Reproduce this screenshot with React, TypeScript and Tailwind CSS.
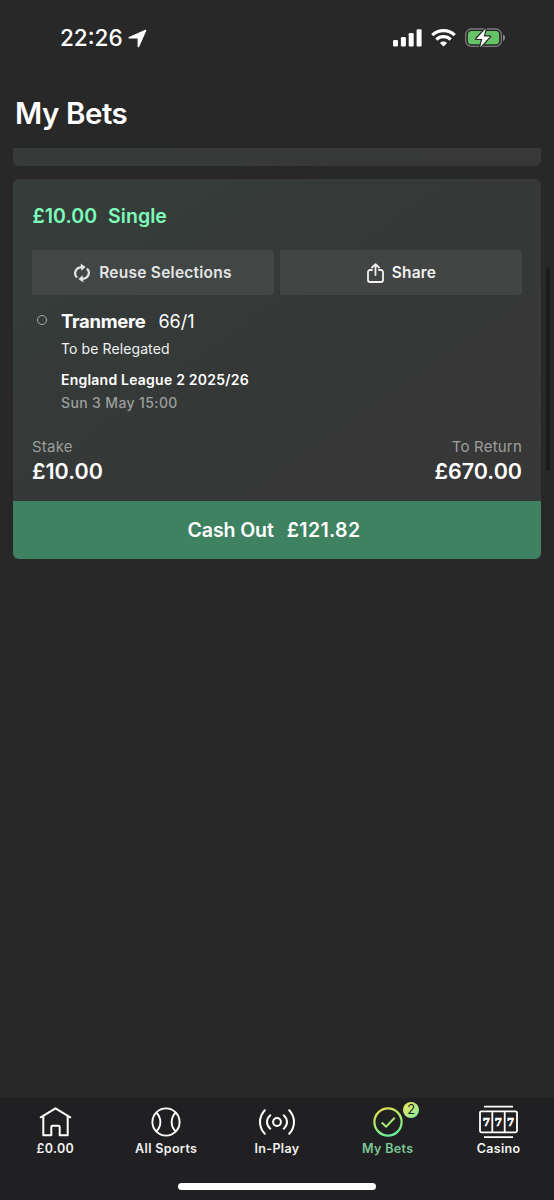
import type { ReactNode } from 'react';

interface TabItem {
  label: string;
  icon: ReactNode;
  active?: boolean;
  badge?: number;
}

function LocationArrow() {
  return (
    <svg width="19" height="19" viewBox="0 0 19 19" fill="white">
      <path d="M17.900.9c.5.2.5.7.3 1.200l-7 15.700c-.4.9-1.600.7-1.600-.3V9.600H1.300c-1 0-1.200-1.200-.3-1.600L16.700.9c.4-.2.9-.2 1.200 0z" />
    </svg>
  );
}

function SignalIcon() {
  return (
    <svg width="29" height="19" viewBox="0 0 29 19" fill="white">
      <rect x="0" y="11" width="5" height="6.500" rx="1.300" />
      <rect x="7.900" y="8" width="5" height="9.500" rx="1.300" />
      <rect x="15.700" y="4" width="5" height="13.500" rx="1.300" />
      <rect x="23.600" y="0.200" width="5" height="17.300" rx="1.300" />
    </svg>
  );
}

function WifiIcon() {
  return (
    <svg width="25" height="19" viewBox="0 0 25 19" fill="none" stroke="white" strokeWidth="3.200">
      <path d="M1.300 6.100a16.200 16.200 0 0 1 22.400 0" />
      <path d="M5.300 10.500a10.400 10.400 0 0 1 14.400 0" />
      <path d="M12.500 17.600l-3.600-3.600a5.200 5.200 0 0 1 7.200 0z" fill="white" stroke="none" />
    </svg>
  );
}

function BatteryIcon() {
  return (
    <svg width="41" height="21" viewBox="0 0 41 21">
      <rect x="0.700" y="1" width="35.600" height="17.400" rx="5.500" fill="none" stroke="#7b7b7b" strokeWidth="1.300" />
      <rect x="2.900" y="3.100" width="31.200" height="13.200" rx="3.600" fill="#65c466" />
      <path d="M38 6.600c1.300.4 2 1.600 2 3.100s-.7 2.700-2 3.100z" fill="#8a8a8a" />
      <path
        d="M20.800.5L11.200 10.900h6.200l-2.300 8.300 9.900-10.700h-6.300z"
        fill="white"
        stroke="#282828"
        strokeWidth="2.400"
        strokeLinejoin="round"
        paintOrder="stroke"
      />
    </svg>
  );
}

function ReuseIcon() {
  return (
    <svg width="16" height="20" viewBox="0 0 16 20" fill="none" stroke="#e4e6e5" strokeWidth="2.200">
      <path d="M3 14.600C-.8 10.600 1.600 4.600 7.600 4.200" />
      <path d="M13 5.400C16.800 9.400 14.400 15.400 8.400 15.800" />
      <path d="M6.600.6l5 3.500-4.200 3.600zM9.400 19.400l-5-3.500 4.200-3.600z" fill="#e4e6e5" stroke="none" />
    </svg>
  );
}

function ShareIcon() {
  return (
    <svg
      width="17"
      height="20"
      viewBox="0 0 17 20"
      fill="none"
      stroke="#f0f1f0"
      strokeWidth="1.800"
      strokeLinecap="round"
      strokeLinejoin="round"
    >
      <path d="M5 7H3a2 2 0 0 0-2 2v8a2 2 0 0 0 2 2h11a2 2 0 0 0 2-2V9a2 2 0 0 0-2-2h-2" />
      <path d="M8.500 12V1.200M5 4.500l3.500-3.400L12 4.500" />
    </svg>
  );
}

function HomeIcon() {
  return (
    <svg width="33" height="30" viewBox="0 0 33 30" fill="none" stroke="white" strokeWidth="2" strokeLinejoin="round">
      <path d="M1.700 10.300L16.500 1.300l14.800 9" strokeLinecap="round" />
      <path d="M4.300 9v19.300h8V20a1.200 1.200 0 0 1 1.200-1.200h6a1.200 1.200 0 0 1 1.200 1.200v8.300h8V9" />
    </svg>
  );
}

function BallIcon() {
  return (
    <svg width="30" height="30" viewBox="0 0 30 30" fill="none" stroke="white" strokeWidth="1.900">
      <circle cx="15" cy="15" r="13.600" />
      <path d="M5 5.200c5.800 5.600 5.800 14 0 19.600M25 5.200c-5.800 5.600-5.800 14 0 19.600" />
    </svg>
  );
}

function InPlayIcon() {
  return (
    <svg width="36" height="28" viewBox="0 0 36 28" fill="none" stroke="white" strokeWidth="2" strokeLinecap="round">
      <circle cx="18" cy="14" r="3.900" />
      <path d="M11.300 7.300c-4.400 3.800-4.400 9.600 0 13.400M24.700 7.300c4.400 3.800 4.400 9.600 0 13.400" />
      <path d="M5.800 2.200C-.6 9-.6 19 5.800 25.800M30.200 2.200c6.400 6.800 6.400 16.800 0 23.600" />
    </svg>
  );
}

function MyBetsIcon() {
  return (
    <svg width="30" height="30" viewBox="0 0 30 30" fill="none">
      <defs>
        <linearGradient id="bets-ring" x1="8" y1="1" x2="20" y2="29" gradientUnits="userSpaceOnUse">
          <stop offset="0" stopColor="#e6dc50" />
          <stop offset="0.500" stopColor="#a4ec6c" />
          <stop offset="1" stopColor="#66eea0" />
        </linearGradient>
      </defs>
      <circle cx="15" cy="15" r="13.600" stroke="url(#bets-ring)" strokeWidth="2.200" />
      <path d="M8.700 15.500l4.400 4.200 8.600-8.900" stroke="#a4ec76" strokeWidth="2" />
    </svg>
  );
}

function CasinoIcon() {
  return (
    <svg width="39" height="34" viewBox="0 0 39 34" fill="none" stroke="white" strokeWidth="1.800">
      <path d="M5 1.600h29M5 32.200h29" />
      <rect x="1" y="6.300" width="37" height="21" rx="1.500" />
      <path d="M13.300 6.300v21M25.700 6.300v21" />
      <g fill="white" fontFamily="DejaVu Serif, serif" fontWeight="700" fontSize="10.500" textAnchor="middle" strokeWidth="0.700">
        <text x="7.300" y="20.800">7</text>
        <text x="19.500" y="20.800">7</text>
        <text x="31.700" y="20.800">7</text>
      </g>
    </svg>
  );
}

const TABS: TabItem[] = [
  { label: '£0.00', icon: <HomeIcon /> },
  { label: 'All Sports', icon: <BallIcon /> },
  { label: 'In-Play', icon: <InPlayIcon /> },
  { label: 'My Bets', icon: <MyBetsIcon />, active: true, badge: 2 },
  { label: 'Casino', icon: <CasinoIcon /> },
];

function StatusBar() {
  return (
    <div className="flex h-[76px] items-center justify-between pr-[48px] pl-[60px]">
      <div className="flex items-center gap-[5px]">
        <span className="text-[22.5px] leading-7 font-medium">22:26</span>
        <LocationArrow />
      </div>
      <div className="flex items-center gap-[9px]">
        <SignalIcon />
        <WifiIcon />
        <BatteryIcon />
      </div>
    </div>
  );
}

function BetCard() {
  return (
    <section className="mt-[13px] overflow-hidden rounded-md">
      <div className="bg-linear-[145deg] from-[#353e3a] via-[#353837] to-[#383737] px-[19px] pt-[23px] pb-[15px]">
        <h2 className="flex gap-[11px] pl-[0.5px] text-[19.5px] leading-7 font-semibold tracking-[0.05px] text-[#7dfcbb]">
          <span>£10.00</span>
          <span>Single</span>
        </h2>

        <div className="mt-5 grid grid-cols-2 gap-[6px]">
          <button className="flex h-[45px] items-center justify-center gap-[9px] rounded-[3px] bg-[#424645] text-[15.5px] font-semibold tracking-[0.25px] text-[#e4e6e5]">
            <ReuseIcon />
            <span className="pt-px">Reuse Selections</span>
          </button>
          <button className="flex h-[45px] items-center justify-center gap-2 rounded-[3px] bg-[#424544] pl-px text-[15.5px] font-semibold tracking-[0.2px] text-[#f0f1f0]">
            <ShareIcon />
            <span className="pt-px">Share</span>
          </button>
        </div>

        <div className="mt-[14px] flex">
          <div className="w-[29px] pt-[6px] pl-[5px]">
            <div className="size-[10px] rounded-full border-[1.5px] border-[#a9adab]" />
          </div>
          <div>
            <p className="flex h-6 items-baseline gap-[13px] text-[18.5px] leading-6">
              <span className="font-bold tracking-[-0.3px]">Tranmere</span>
              <span className="text-[18px]">66/1</span>
            </p>
            <p className="mt-[6px] text-[14px] leading-5 tracking-[0.1px] text-[#f0f1f0]">To be Relegated</p>
            <p className="mt-[11px] text-[14px] leading-5 font-semibold tracking-[0.22px]">England League 2 2025/26</p>
            <p className="mt-[3px] text-[14px] leading-5 font-medium tracking-[0.37px] text-[#9c9f9e]">Sun 3 May 15:00</p>
          </div>
        </div>

        <div className="mt-6 flex justify-between">
          <div>
            <p className="text-[15px] leading-5 tracking-[0.2px] text-[#9c9f9e]">Stake</p>
            <p className="text-[21.5px] leading-[29px] font-semibold">£10.00</p>
          </div>
          <div className="text-right">
            <p className="text-[15px] leading-5 tracking-[0.2px] text-[#9c9f9e]">To Return</p>
            <p className="text-[21.5px] leading-[29px] font-semibold">£670.00</p>
          </div>
        </div>
      </div>
      <button className="flex h-[58px] w-full items-center justify-center gap-[13px] bg-[#3e8262] pt-px pr-[6px] text-[19.5px] font-semibold">
        <span className="tracking-[-0.1px]">Cash Out</span>
        <span className="tracking-[0.35px]">£121.82</span>
      </button>
    </section>
  );
}

function TabBar() {
  return (
    <nav className="h-[102px] bg-[#202022]">
      <div className="grid grid-cols-5 pt-[7px]">
        {TABS.map(tab => (
          <div key={tab.label} className="flex flex-col items-center">
            <div className="relative flex h-[33px] items-center">
              {tab.icon}
              {tab.badge && (
                <span className="absolute -top-[3.5px] left-[30.5px] flex size-4 items-center justify-center rounded-full bg-linear-to-br from-[#f3e24e] to-[#6feea0] text-[13px] leading-none text-[#1f1f20]">
                  {tab.badge}
                </span>
              )}
            </div>
            <span
              className={
                tab.active
                  ? 'mt-[3px] text-[12.5px] leading-4 font-semibold tracking-[0.35px] text-[#7cc997]'
                  : 'mt-[3px] text-[12.5px] leading-4 font-semibold tracking-[0.35px] text-[#f2f2f2]'
              }
            >
              {tab.label}
            </span>
          </div>
        ))}
      </div>
      <div className="mx-auto mt-[26px] h-[7px] w-[198px] rounded-full bg-white" />
    </nav>
  );
}

export default function App() {
  return (
    <div className="relative flex h-[1200px] w-[554px] flex-col overflow-hidden bg-[#282828] font-['Inter',sans-serif] text-white">
      <StatusBar />
      <h1 className="h-[72px] pt-[19px] pl-[15px] text-[29.5px] leading-9 font-semibold tracking-[-0.45px]">My Bets</h1>
      <main className="flex-1 px-[13px]">
        {/* tail of the previous bet, scrolled under the header */}
        <div className="h-[18px] rounded-b-md bg-linear-to-r from-[#363b39] to-[#373837]" />
        <BetCard />
      </main>
      <TabBar />
      {/* scroll indicator */}
      <div className="absolute top-[267px] right-[4px] h-[204px] w-[4px] rounded-full bg-[#1c1c1c]" />
    </div>
  );
}
